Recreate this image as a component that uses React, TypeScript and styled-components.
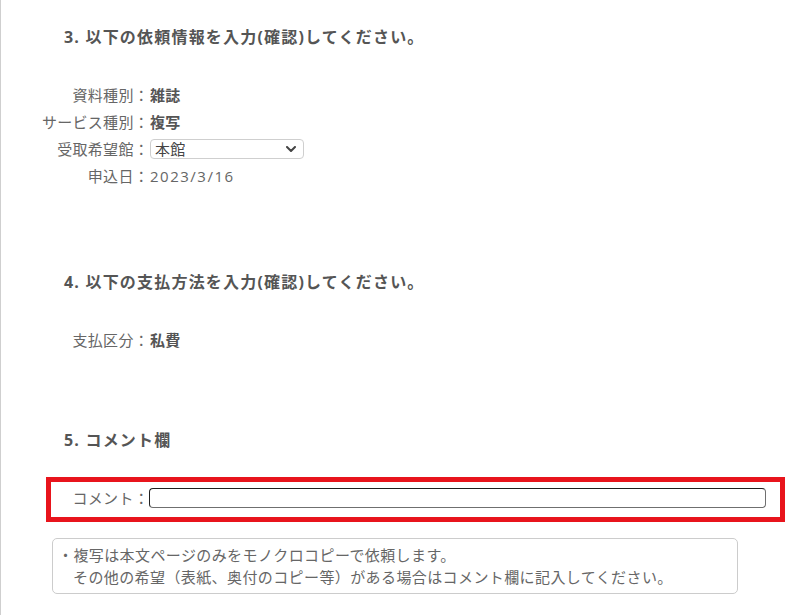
import React from "react";
import styled, { createGlobalStyle } from "styled-components";

const GlobalStyle = createGlobalStyle`
  html, body { margin: 0; padding: 0; background: #fff; }
  body {
    font-family: "Open Sans", "Noto Sans CJK JP", sans-serif;
    color: #666;
  }
`;

const Page = styled.main`
  border-left: 1px solid #cfcfcf;
  min-height: 615px;
  box-sizing: border-box;
  padding: 25px 4px 0 0;
`;

const Heading = styled.h2<{ $top?: number }>`
  margin: ${(p) => p.$top ?? 0}px 0 0 63px;
  font-size: 16px;
  font-weight: 700;
  line-height: 24px;
  letter-spacing: 1.2px;
  color: #555;
`;

const InfoGrid = styled.dl<{ $top: number }>`
  display: grid;
  grid-template-columns: 148px 1fr;
  grid-auto-rows: 27px;
  align-items: center;
  margin: ${(p) => p.$top}px 0 0 0;
  font-size: 15px;
  letter-spacing: 0.3px;
`;

const Label = styled.dt`
  text-align: right;
  color: #666;
  white-space: nowrap;
`;

const Value = styled.dd<{ $bold?: boolean; $wide?: boolean }>`
  margin: 0;
  padding-left: 1px;
  color: ${(p) => (p.$bold ? "#555" : "#666")};
  font-weight: ${(p) => (p.$bold ? 700 : 400)};
  letter-spacing: ${(p) => (p.$wide ? "1.5px" : "0.3px")};
  display: flex;
  align-items: center;
`;

const SelectWrap = styled.div`
  position: relative;
  width: 154px;
  height: 20px;
`;

const Select = styled.select`
  appearance: none;
  width: 100%;
  height: 20px;
  box-sizing: border-box;
  border: 1px solid #cfcfcf;
  border-radius: 4px;
  background: #fff;
  padding: 0 0 0 4px;
  font-family: "Open Sans", "Noto Sans CJK JP", sans-serif;
  font-size: 15px;
  line-height: 18px;
  color: #444;
  letter-spacing: 0.3px;
`;

const Chevron = styled.svg`
  position: absolute;
  right: 8px;
  top: 7px;
  width: 10px;
  height: 6px;
  pointer-events: none;
`;

const CommentBox = styled.div`
  margin: 25px 0 0 45px;
  border: 5px solid #e8141c;
  display: grid;
  grid-template-columns: 98px 1fr;
  align-items: center;
  padding: 5px 14px 9px 0;
  font-size: 15px;
  letter-spacing: 0.3px;
`;

const CommentInput = styled.input`
  height: 20px;
  box-sizing: border-box;
  border: 1px solid;
  border-color: #1f1f1f #6f6f6f #6f6f6f #1f1f1f;
  border-radius: 4px;
  padding: 0 4px;
  margin: 0;
  width: 100%;
  background: #fff;
`;

const Note = styled.p`
  margin: 16px 0 0 51px;
  width: 686px;
  box-sizing: border-box;
  border: 1px solid #cccccc;
  border-radius: 5px;
  padding: 5px 10px 5px 20px;
  text-indent: -15px;
  font-size: 15px;
  line-height: 22px;
  letter-spacing: 0.4px;
  color: #666;
`;

export default function App() {
  return (
    <>
      <GlobalStyle />
      <Page>
        <Heading>3. 以下の依頼情報を入力(確認)してください。</Heading>
        <InfoGrid $top={32}>
          <Label>資料種別：</Label>
          <Value $bold>雑誌</Value>
          <Label>サービス種別：</Label>
          <Value $bold>複写</Value>
          <Label>受取希望館：</Label>
          <Value>
            <SelectWrap>
              <Select defaultValue="honkan">
                <option value="honkan">本館</option>
              </Select>
              <Chevron viewBox="0 0 10 6">
                <path d="M1 1 L5 5 L9 1" fill="none" stroke="#444" strokeWidth="2" strokeLinecap="round" strokeLinejoin="round" />
              </Chevron>
            </SelectWrap>
          </Value>
          <Label>申込日：</Label>
          <Value $wide>2023/3/16</Value>
        </InfoGrid>

        <Heading $top={81}>4. 以下の支払方法を入力(確認)してください。</Heading>
        <InfoGrid $top={32}>
          <Label>支払区分：</Label>
          <Value $bold>私費</Value>
        </InfoGrid>

        <Heading $top={75}>5. コメント欄</Heading>
        <CommentBox>
          <Label>コメント：</Label>
          <CommentInput type="text" />
        </CommentBox>

        <Note>
          ・複写は本文ページのみをモノクロコピーで依頼します。
          <br />
          その他の希望（表紙、奥付のコピー等）がある場合はコメント欄に記入してください。
        </Note>
      </Page>
    </>
  );
}
